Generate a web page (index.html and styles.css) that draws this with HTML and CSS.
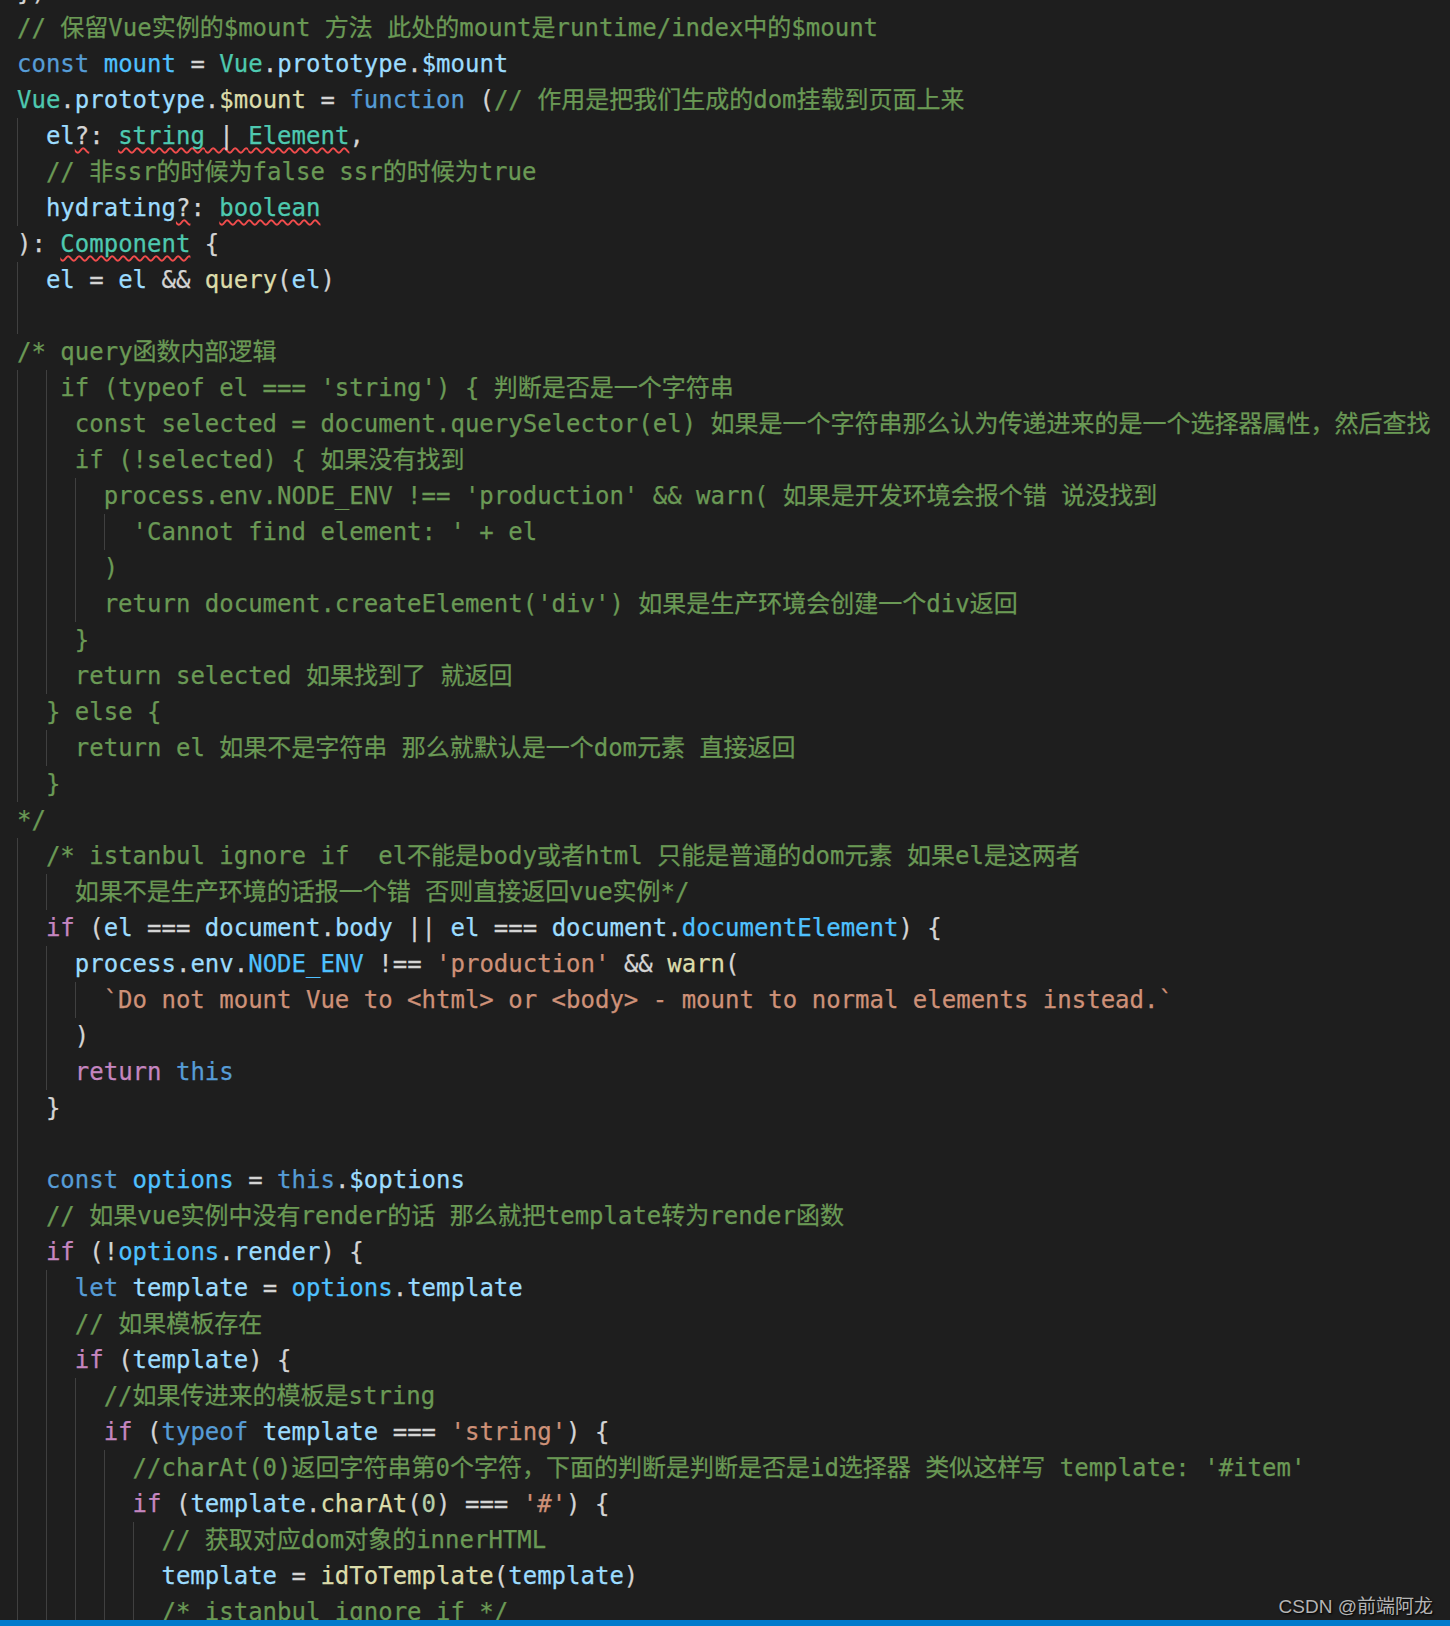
FILE: index.html
```html
<!DOCTYPE html>
<html lang="zh-CN">
<head>
<meta charset="utf-8">
<title>Vue $mount</title>
<link rel="stylesheet" href="styles.css">
</head>
<body>
<div class="editor">
  <div class="code">
    <div class="lines">
      <div class="l">})</div>
      <div class="l"><span class="c">// 保留Vue实例的$mount 方法 此处的mount是runtime/index中的$mount</span></div>
      <div class="l"><span class="k">const</span> <span class="cn">mount</span> = <span class="t">Vue</span>.<span class="v">prototype</span>.<span class="v">$mount</span></div>
      <div class="l"><span class="t">Vue</span>.<span class="v">prototype</span>.<span class="f">$mount</span> = <span class="k">function</span> (<span class="c">// 作用是把我们生成的dom挂载到页面上来</span></div>
      <div class="l"><span class="g"></span><span class="v">el</span><span class="e">?</span>: <span class="e"><span class="t">string</span> | <span class="t">Element</span></span>,</div>
      <div class="l"><span class="g"></span><span class="c">// 非ssr的时候为false ssr的时候为true</span></div>
      <div class="l"><span class="g"></span><span class="v">hydrating</span><span class="e">?</span>: <span class="e t">boolean</span></div>
      <div class="l">): <span class="e t">Component</span> {</div>
      <div class="l"><span class="g"></span><span class="v">el</span> = <span class="v">el</span> &amp;&amp; <span class="f">query</span>(<span class="v">el</span>)</div>
      <div class="l"><span class="g"></span></div>
      <div class="l"><span class="c">/* query函数内部逻辑</span></div>
      <div class="l"><span class="g"></span><span class="g g1"></span><span class="c">if (typeof el === 'string') { 判断是否是一个字符串</span></div>
      <div class="l"><span class="g"></span><span class="g"></span><span class="c">const selected = document.querySelector(el) 如果是一个字符串那么认为传递进来的是一个选择器属性，然后查找</span></div>
      <div class="l"><span class="g"></span><span class="g"></span><span class="c">if (!selected) { 如果没有找到</span></div>
      <div class="l"><span class="g"></span><span class="g"></span><span class="g"></span><span class="c">process.env.NODE_ENV !== 'production' &amp;&amp; warn( 如果是开发环境会报个错 说没找到</span></div>
      <div class="l"><span class="g"></span><span class="g"></span><span class="g"></span><span class="g"></span><span class="c">'Cannot find element: ' + el</span></div>
      <div class="l"><span class="g"></span><span class="g"></span><span class="g"></span><span class="c">)</span></div>
      <div class="l"><span class="g"></span><span class="g"></span><span class="g"></span><span class="c">return document.createElement('div') 如果是生产环境会创建一个div返回</span></div>
      <div class="l"><span class="g"></span><span class="g"></span><span class="c">}</span></div>
      <div class="l"><span class="g"></span><span class="g"></span><span class="c">return selected 如果找到了 就返回</span></div>
      <div class="l"><span class="g"></span><span class="c">} else {</span></div>
      <div class="l"><span class="g"></span><span class="g"></span><span class="c">return el 如果不是字符串 那么就默认是一个dom元素 直接返回</span></div>
      <div class="l"><span class="g"></span><span class="c">}</span></div>
      <div class="l"><span class="c">*/</span></div>
      <div class="l"><span class="g"></span><span class="c">/* istanbul ignore if  el不能是body或者html 只能是普通的dom元素 如果el是这两者</span></div>
      <div class="l"><span class="g"></span><span class="g"></span><span class="c">如果不是生产环境的话报一个错 否则直接返回vue实例*/</span></div>
      <div class="l"><span class="g"></span><span class="p">if</span> (<span class="v">el</span> === <span class="v">document</span>.<span class="v">body</span> || <span class="v">el</span> === <span class="v">document</span>.<span class="cn">documentElement</span>) {</div>
      <div class="l"><span class="g"></span><span class="g"></span><span class="v">process</span>.<span class="v">env</span>.<span class="cn">NODE_ENV</span> !== <span class="s">'production'</span> &amp;&amp; <span class="f">warn</span>(</div>
      <div class="l"><span class="g"></span><span class="g"></span><span class="g"></span><span class="s">`Do not mount Vue to &lt;html&gt; or &lt;body&gt; - mount to normal elements instead.`</span></div>
      <div class="l"><span class="g"></span><span class="g"></span>)</div>
      <div class="l"><span class="g"></span><span class="g"></span><span class="p">return</span> <span class="k">this</span></div>
      <div class="l"><span class="g"></span>}</div>
      <div class="l"><span class="g"></span></div>
      <div class="l"><span class="g"></span><span class="k">const</span> <span class="cn">options</span> = <span class="k">this</span>.<span class="v">$options</span></div>
      <div class="l"><span class="g"></span><span class="c">// 如果vue实例中没有render的话 那么就把template转为render函数</span></div>
      <div class="l"><span class="g"></span><span class="p">if</span> (!<span class="cn">options</span>.<span class="v">render</span>) {</div>
      <div class="l"><span class="g"></span><span class="g"></span><span class="k">let</span> <span class="v">template</span> = <span class="cn">options</span>.<span class="v">template</span></div>
      <div class="l"><span class="g"></span><span class="g"></span><span class="c">// 如果模板存在</span></div>
      <div class="l"><span class="g"></span><span class="g"></span><span class="p">if</span> (<span class="v">template</span>) {</div>
      <div class="l"><span class="g"></span><span class="g"></span><span class="g"></span><span class="c">//如果传进来的模板是string</span></div>
      <div class="l"><span class="g"></span><span class="g"></span><span class="g"></span><span class="p">if</span> (<span class="k">typeof</span> <span class="v">template</span> === <span class="s">'string'</span>) {</div>
      <div class="l"><span class="g"></span><span class="g"></span><span class="g"></span><span class="g"></span><span class="c">//charAt(0)返回字符串第0个字符，下面的判断是判断是否是id选择器 类似这样写 template: '#item'</span></div>
      <div class="l"><span class="g"></span><span class="g"></span><span class="g"></span><span class="g"></span><span class="p">if</span> (<span class="v">template</span>.<span class="f">charAt</span>(<span class="n">0</span>) === <span class="s">'#'</span>) {</div>
      <div class="l"><span class="g"></span><span class="g"></span><span class="g"></span><span class="g"></span><span class="g"></span><span class="c">// 获取对应dom对象的innerHTML</span></div>
      <div class="l"><span class="g"></span><span class="g"></span><span class="g"></span><span class="g"></span><span class="g"></span><span class="v">template</span> = <span class="f">idToTemplate</span>(<span class="v">template</span>)</div>
      <div class="l"><span class="g"></span><span class="g"></span><span class="g"></span><span class="g"></span><span class="g"></span><span class="c">/* istanbul ignore if */</span></div>
    </div>
  </div>
  <div class="statusbar"></div>
  <div class="wm">CSDN @前端阿龙</div>
</div>
</body>
</html>
```
FILE: styles.css
```css
html, body {
  margin: 0;
  padding: 0;
  background: #1e1e1e;
}

.editor {
  width: 1450px;
  height: 1626px;
  display: flex;
  flex-direction: column;
  position: relative;
  overflow: hidden;
  background: #1e1e1e;
}

.code {
  flex: 1;
  min-height: 0;
  overflow: hidden;
  padding-left: 17px;
  font-family: "DejaVu Sans Mono", "Noto Sans CJK SC", monospace;
  font-size: 24px;
  color: #d4d4d4;
  -webkit-text-stroke: 0.25px currentColor;
}

.lines {
  margin-top: -26px;
}

.l {
  height: 36px;
  line-height: 36px;
  white-space: pre;
}

.g {
  display: inline-block;
  width: 2ch;
  height: 36px;
  vertical-align: top;
  box-shadow: inset 1px 0 0 #404040;
}

.g1 {
  width: 1ch;
}

.c { color: #6a9955; }
.k { color: #569cd6; }
.p { color: #c586c0; }
.v { color: #9cdcfe; }
.cn { color: #4fc1ff; }
.t { color: #4ec9b0; }
.f { color: #dcdcaa; }
.s { color: #ce9178; }
.n { color: #b5cea8; }

.e {
  text-decoration: underline wavy #f14c4c;
  text-decoration-thickness: 1.5px;
  text-underline-offset: 3px;
  text-decoration-skip-ink: none;
}

.statusbar {
  height: 6px;
  flex: none;
  background: #007acc;
}

.wm {
  position: absolute;
  right: 17px;
  bottom: 8px;
  font-family: "Liberation Sans", "Noto Sans CJK SC", sans-serif;
  font-size: 19px;
  color: #b4b4b4;
  -webkit-text-stroke: 0;
  text-shadow: 1px 1px 2px #000;
}
```
